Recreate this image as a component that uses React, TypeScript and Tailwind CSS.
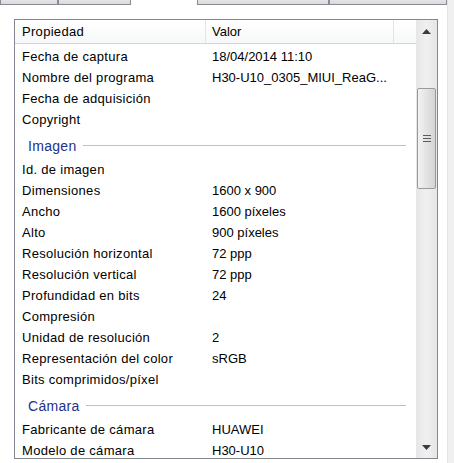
import React from "react";

type Row = { k: string; v?: string } | { section: string };

const rows: Row[] = [
  { k: "Fecha de captura", v: "18/04/2014 11:10" },
  { k: "Nombre del programa", v: "H30-U10_0305_MIUI_ReaG..." },
  { k: "Fecha de adquisición" },
  { k: "Copyright" },
  { section: "Imagen" },
  { k: "Id. de imagen" },
  { k: "Dimensiones", v: "1600 x 900" },
  { k: "Ancho", v: "1600 píxeles" },
  { k: "Alto", v: "900 píxeles" },
  { k: "Resolución horizontal", v: "72 ppp" },
  { k: "Resolución vertical", v: "72 ppp" },
  { k: "Profundidad en bits", v: "24" },
  { k: "Compresión" },
  { k: "Unidad de resolución", v: "2" },
  { k: "Representación del color", v: "sRGB" },
  { k: "Bits comprimidos/píxel" },
  { section: "Cámara" },
  { k: "Fabricante de cámara", v: "HUAWEI" },
  { k: "Modelo de cámara", v: "H30-U10" },
];

function Tab({ w, selected }: { w: string; selected?: boolean }) {
  if (selected) return <div className={`${w} h-[5px]`} />;
  return (
    <div
      className={`${w} h-[5px] border-b border-x border-[#898c95] bg-gradient-to-b from-[#e5e5e5] to-[#d9d9d9]`}
    />
  );
}

function ScrollBar() {
  return (
    <div className="w-[21px] flex flex-col bg-gradient-to-r from-[#e6e6e6] via-[#f0f0f0] to-[#e6e6e6]">
      <div className="h-[22px] flex items-center justify-center">
        <svg width="9" height="5" viewBox="0 0 9 5">
          <path d="M0 5 L4.5 0 L9 5 Z" fill="#3c3c3c" />
        </svg>
      </div>
      <div className="h-[46px]" />
      <div className="h-[101px] mx-[1px] rounded-[2px] border border-[#9a9a9a] bg-gradient-to-r from-[#f2f2f2] via-[#e3e3e3] to-[#d4d4d4] flex items-center justify-center">
        <div className="flex flex-col gap-[2px]">
          <div className="w-[8px] h-[1px] bg-[#5a5a5a]" />
          <div className="w-[8px] h-[1px] bg-[#5a5a5a]" />
          <div className="w-[8px] h-[1px] bg-[#5a5a5a]" />
        </div>
      </div>
      <div className="flex-1" />
      <div className="h-[22px] flex items-center justify-center">
        <svg width="9" height="5" viewBox="0 0 9 5">
          <path d="M0 0 L4.5 5 L9 0 Z" fill="#3c3c3c" />
        </svg>
      </div>
    </div>
  );
}

export default function App() {
  return (
    <div
      className="w-[454px] h-[463px] bg-white flex overflow-hidden text-[13px] tracking-[0.3px] text-black"
      style={{ fontFamily: '"Liberation Sans", Arial, sans-serif' }}
    >
      <div className="w-[447px] flex flex-col">
        <div className="flex h-[5px]">
          <Tab w="w-[58px]" />
          <Tab w="w-[73px]" />
          <Tab w="w-[66px]" selected />
          <Tab w="w-[132px]" />
          <Tab w="w-[118px]" />
        </div>
        <div className="ml-[14px] mt-[14px] w-[424px] h-[440px] border border-[#828790] flex overflow-hidden">
          <div className="flex-1 flex flex-col overflow-hidden">
            <div className="h-[24px] flex shrink-0 border-b border-[#d5d5d5] bg-gradient-to-b from-white to-[#f7f8f9]">
              <div className="w-[191px] pl-[7px] flex items-center border-r border-[#e5e5e5]">Propiedad</div>
              <div className="w-[188px] pl-[6px] flex items-center border-r border-[#e5e5e5] tracking-normal">Valor</div>
              <div className="flex-1" />
            </div>
            <div className="h-[2px] shrink-0" />
            {rows.map((r, i) =>
              "section" in r ? (
                <div key={i} className="h-[29px] shrink-0 flex items-center pl-[13px] pr-[10px] pt-[4px]">
                  <span className="text-[#1e3287] text-[14px] pr-[6px]">{r.section}</span>
                  <div className="flex-1 h-[1px] bg-[#b4c3d4] -mt-[2px]" />
                </div>
              ) : (
                <div key={i} className="h-[21px] shrink-0 flex items-center">
                  <div className="w-[191px] pl-[7px] whitespace-nowrap">{r.k}</div>
                  <div className="pl-[6px] whitespace-nowrap tracking-normal">{r.v}</div>
                </div>
              )
            )}
          </div>
          <ScrollBar />
        </div>
      </div>
      <div className="flex-1 bg-[#f0f0f0] border-l border-[#e3e3e3]" />
    </div>
  );
}
